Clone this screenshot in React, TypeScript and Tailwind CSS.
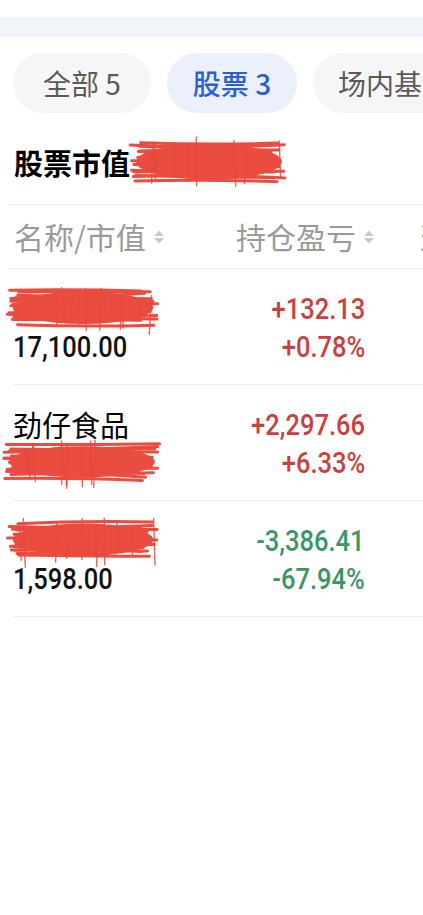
import React from 'react'

const cjk = "font-['Noto_Sans_CJK_SC','Noto_Sans',sans-serif]"
const num = "font-['Roboto','Noto_Sans_CJK_SC',sans-serif]"

// seeded random so the scribbles look the same on every render
function rng(seed: number) {
  let s = seed
  return () => {
    s = (s * 9301 + 49297) % 233280
    return s / 233280
  }
}

function Scribble({ w, h, seed = 1 }: { w: number; h: number; seed?: number }) {
  const r = rng(seed)
  const lines: string[] = []
  // horizontal back-and-forth strokes
  for (let i = 0; i < 16; i++) {
    const y = h * 0.2 + (h * 0.55 * i) / 15 + (r() - 0.5) * 5
    const x0 = 2 + r() * 12
    const x1 = w - 3 - r() * 18
    lines.push(`M${x0} ${y} Q${w / 2} ${y + (r() - 0.5) * 8} ${x1} ${y + (r() - 0.5) * 6}`)
  }
  // loose verticals trailing off the strokes
  const jag: string[] = []
  for (let i = 0; i < 12; i++) {
    const x = w * 0.08 + r() * w * 0.88
    const top = h * 0.1 + r() * h * 0.25
    const bottom = h * 0.6 + r() * h * 0.35
    jag.push(`M${x} ${top} L${x + (r() - 0.5) * 5} ${bottom}`)
  }
  return (
    <svg width={w} height={h} viewBox={`0 0 ${w} ${h}`} className="shrink-0">
      <ellipse cx={w / 2} cy={h * 0.48} rx={w * 0.45} ry={h * 0.27} fill="#ea4c3f" />
      {lines.map((d, i) => (
        <path key={i} d={d} stroke="#ea4c3f" strokeWidth={3} fill="none" strokeLinecap="round" />
      ))}
      {jag.map((d, i) => (
        <path key={'j' + i} d={d} stroke="#e8493b" strokeWidth={1.4} fill="none" strokeLinecap="round" opacity={0.85} />
      ))}
    </svg>
  )
}

function SortIcon() {
  return (
    <svg width="12" height="18" viewBox="0 0 12 18" className="ml-[7px] shrink-0">
      <path d="M6 2.5 L11 8 H1 Z" fill="#c8c8c8" />
      <path d="M6 15.5 L11 10 H1 Z" fill="#c8c8c8" />
    </svg>
  )
}

function Num({ children, className = '' }: { children: React.ReactNode; className?: string }) {
  return (
    <span className={`${num} inline-block scale-x-[0.85] text-[30px] font-medium leading-[38px] ${className}`}>
      {children}
    </span>
  )
}

const rows = [
  { name: null, nameSeed: 3, value: '17,100.00', pnl: '+132.13', pct: '+0.78%', up: true },
  { name: '劲仔食品', nameSeed: 7, value: null, pnl: '+2,297.66', pct: '+6.33%', up: true },
  { name: null, nameSeed: 11, value: '1,598.00', pnl: '-3,386.41', pct: '-67.94%', up: false },
]

export default function App() {
  return (
    <div className={`min-h-screen w-full overflow-hidden bg-white ${cjk}`}>
      <div className="h-[17px]" />
      <div className="h-[20px] bg-[#f1f4fb]" />

      {/* Tabs */}
      <div className="mt-[16px] flex gap-4 overflow-hidden pl-[13px] whitespace-nowrap">
        <div className="flex h-[60px] w-[138px] shrink-0 items-center justify-center rounded-full bg-[#f6f6f6] text-[28px] text-[#5a5a5a]">
          全部 5
        </div>
        <div className="flex h-[60px] w-[130px] shrink-0 items-center justify-center rounded-full bg-[#ebf0fc] text-[28px] font-medium text-[#2b5fd4]">
          股票 3
        </div>
        <div className="flex h-[60px] w-[150px] shrink-0 items-center rounded-full bg-[#f6f6f6] pl-[25px] text-[28px] text-[#5a5a5a]">
          场内基金 1
        </div>
      </div>

      {/* Title */}
      <div className="flex h-[91px] items-center pl-[14px] pt-[8px]">
        <span className="text-[29px] font-bold text-black">股票市值</span>
        <div className="-ml-[2px]">
          <Scribble w={162} h={66} seed={5} />
        </div>
      </div>

      <div className="ml-[9px] border-t border-[#eeeeee]">
        {/* Header */}
        <div className="flex h-[64px] items-center overflow-hidden whitespace-nowrap border-b border-[#eeeeee] text-[30px] text-[#9a9a9a]">
          <div className="flex w-[227px] shrink-0 items-center pl-[5px]">
            名称/市值
            <SortIcon />
          </div>
          <div className="flex w-[182px] shrink-0 items-center">
            持仓盈亏
            <SortIcon />
          </div>
          <div className="shrink-0">当日盈亏</div>
        </div>
      </div>

      {rows.map((row, i) => (
        <div key={i} className="ml-[13px] flex h-[116px] border-b border-[#eeeeee] pt-[21px]">
          <div className="flex w-[200px] flex-col">
            <div className="flex h-[38px] items-center">
              {row.name ? (
                <span className="text-[29px] text-black">{row.name}</span>
              ) : (
                <div className="-ml-[8px]">
                  <Scribble w={156} h={60} seed={row.nameSeed} />
                </div>
              )}
            </div>
            <div className="flex h-[38px] items-center">
              {row.value ? (
                <Num className="origin-left text-[#111]">{row.value}</Num>
              ) : (
                <div className="-ml-[12px]">
                  <Scribble w={162} h={58} seed={row.nameSeed + 20} />
                </div>
              )}
            </div>
          </div>
          <div className={`flex w-[152px] flex-col items-end ${row.up ? 'text-[#c9413f]' : 'text-[#3a9669]'}`}>
            <Num className="origin-right">{row.pnl}</Num>
            <Num className="origin-right">{row.pct}</Num>
          </div>
        </div>
      ))}
    </div>
  )
}
